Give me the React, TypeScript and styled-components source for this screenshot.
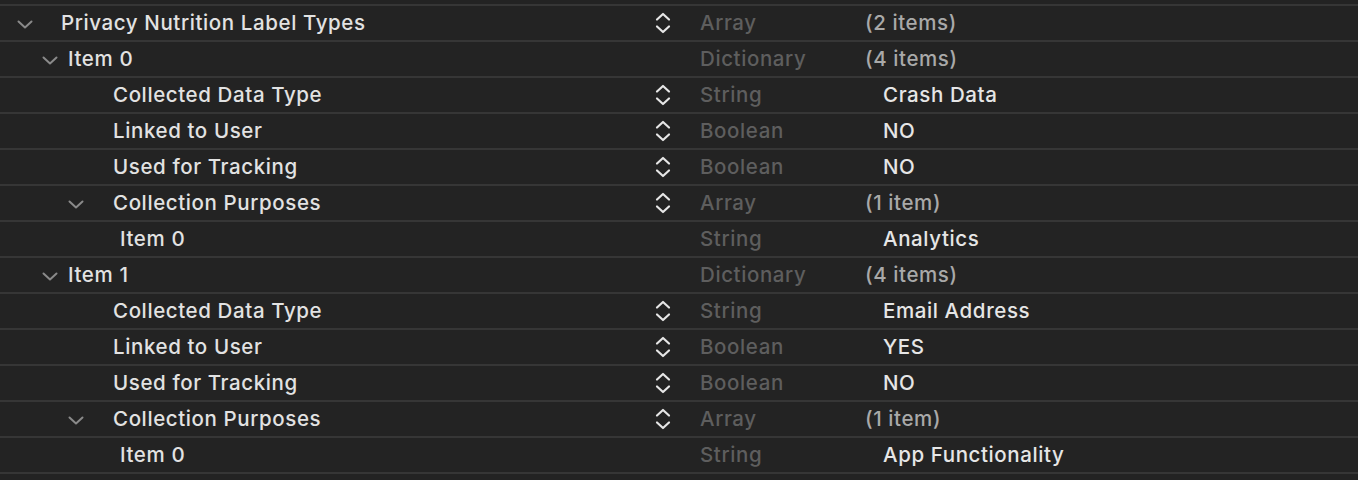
import styled, { createGlobalStyle } from "styled-components";

type Entry = {
  key: string;
  level: number;
  open?: boolean;
  stepper?: boolean;
  type: string;
  value: string;
  count?: boolean;
};

const rows: Entry[] = [
  { key: "Privacy Nutrition Label Types", level: 0, open: true, stepper: true, type: "Array", value: "(2 items)", count: true },
  { key: "Item 0", level: 1, open: true, type: "Dictionary", value: "(4 items)", count: true },
  { key: "Collected Data Type", level: 2, stepper: true, type: "String", value: "Crash Data" },
  { key: "Linked to User", level: 2, stepper: true, type: "Boolean", value: "NO" },
  { key: "Used for Tracking", level: 2, stepper: true, type: "Boolean", value: "NO" },
  { key: "Collection Purposes", level: 2, open: true, stepper: true, type: "Array", value: "(1 item)", count: true },
  { key: "Item 0", level: 3, type: "String", value: "Analytics" },
  { key: "Item 1", level: 1, open: true, type: "Dictionary", value: "(4 items)", count: true },
  { key: "Collected Data Type", level: 2, stepper: true, type: "String", value: "Email Address" },
  { key: "Linked to User", level: 2, stepper: true, type: "Boolean", value: "YES" },
  { key: "Used for Tracking", level: 2, stepper: true, type: "Boolean", value: "NO" },
  { key: "Collection Purposes", level: 2, open: true, stepper: true, type: "Array", value: "(1 item)", count: true },
  { key: "Item 0", level: 3, type: "String", value: "App Functionality" },
];

// chevron x and text x for each nesting level
const chevronX = [17, 42, 68, 68];
const textX = [61, 68, 113, 120];

function App() {
  return (
    <>
      <GlobalStyle />
      <Table>
        {rows.map((r, i) => (
          <Row key={i}>
            <KeyCell>
              {r.open && (
                <Chevron style={{ left: chevronX[r.level] }}>
                  <svg width="16" height="9" viewBox="0 0 16 9">
                    <path d="M1.5 1.5 L8 7.5 L14.5 1.5" fill="none" stroke="currentColor" strokeWidth="2" strokeLinecap="round" strokeLinejoin="round" />
                  </svg>
                </Chevron>
              )}
              <KeyText style={{ paddingLeft: textX[r.level] }}>{r.key}</KeyText>
            </KeyCell>
            <StepperCell>
              {r.stepper && (
                <svg width="18" height="22" viewBox="0 0 18 22">
                  <path d="M3 7.5 L9 2 L15 7.5" fill="none" stroke="currentColor" strokeWidth="2.2" strokeLinecap="round" strokeLinejoin="round" />
                  <path d="M3 14.5 L9 20 L15 14.5" fill="none" stroke="currentColor" strokeWidth="2.2" strokeLinecap="round" strokeLinejoin="round" />
                </svg>
              )}
            </StepperCell>
            <TypeCell>{r.type}</TypeCell>
            <ValueCell $count={!!r.count}>{r.value}</ValueCell>
          </Row>
        ))}
      </Table>
    </>
  );
}

const GlobalStyle = createGlobalStyle`
  html, body {
    margin: 0;
    padding: 0;
    background: #232323;
  }
  body {
    font-family: Inter, "Noto Sans", sans-serif;
    -webkit-font-smoothing: antialiased;
  }
`;

const Table = styled.div`
  padding-top: 4px;
  width: 1358px;
  height: 480px;
  box-sizing: border-box;
  background: #232323;
`;

const Row = styled.div`
  display: grid;
  grid-template-columns: 646px 54px 165px 1fr;
  align-items: center;
  height: 36px;
  box-sizing: border-box;
  border-top: 2px solid #363636;
  font-size: 20.5px;
  font-weight: 500;
  letter-spacing: 0.6px;

  &:last-child {
    height: 38px;
    border-bottom: 2px solid #363636;
  }
`;

const KeyCell = styled.div`
  position: relative;
  height: 100%;
  display: flex;
  align-items: center;
  padding-bottom: 2px;
  box-sizing: border-box;
`;

const Chevron = styled.span`
  position: absolute;
  top: 50%;
  margin-top: -3px;
  display: flex;
  color: #8a8a8a;
`;

const KeyText = styled.span`
  color: #e2e2e2;
  white-space: nowrap;
`;

const StepperCell = styled.div`
  display: flex;
  align-items: center;
  padding-left: 8px;
  color: #e6e6e6;
`;

const TypeCell = styled.div`
  color: #5e5e5e;
  padding-bottom: 2px;
`;

const ValueCell = styled.div<{ $count: boolean }>`
  color: ${(p) => (p.$count ? "#a9a9a9" : "#e6e6e6")};
  padding-left: ${(p) => (p.$count ? "0" : "18px")};
  padding-bottom: 2px;
`;

export default App;
